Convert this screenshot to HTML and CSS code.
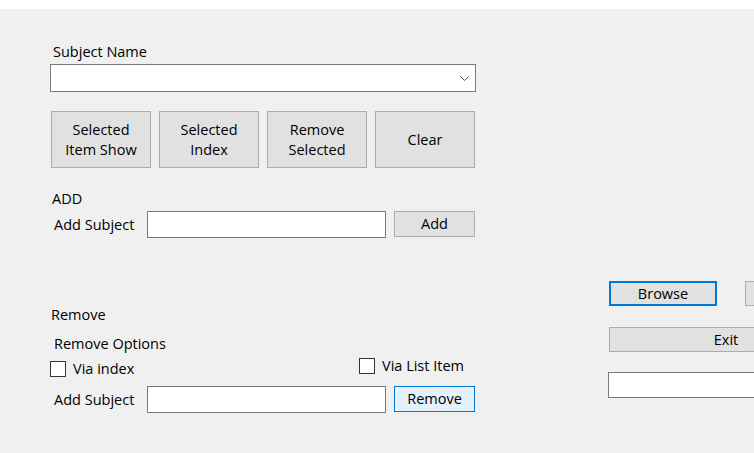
FILE: index.html
```html
<!DOCTYPE html>
<html lang="en">
<head>
<meta charset="utf-8">
<title>Subjects</title>
<link rel="stylesheet" href="styles.css">
</head>
<body>
<div class="topbar"></div>
<main class="form">
  <section class="left">
    <div class="lbl subj">Subject Name</div>
    <div class="combo">
      <svg class="chev" width="9" height="5" viewBox="0 0 9 5"><polyline points="0.5,0.5 4.5,4.5 8.5,0.5" fill="none" stroke="#555" stroke-width="1"/></svg>
    </div>
    <div class="btnrow">
      <button class="btn big">Selected<br>Item Show</button>
      <button class="btn big">Selected<br>Index</button>
      <button class="btn big">Remove<br>Selected</button>
      <button class="btn big">Clear</button>
    </div>
    <div class="lbl add-title">ADD</div>
    <div class="row row-add">
      <div class="lbl rowlbl">Add Subject</div>
      <div class="textbox"></div>
      <button class="btn small">Add</button>
    </div>
    <div class="lbl remove-title">Remove</div>
    <div class="lbl opts-title">Remove Options</div>
    <div class="checks">
      <label class="check c1"><span class="box"></span><span class="lbl">Via index</span></label>
      <label class="check c2"><span class="box"></span><span class="lbl">Via List Item</span></label>
    </div>
    <div class="row row-remove">
      <div class="lbl rowlbl">Add Subject</div>
      <div class="textbox"></div>
      <button class="btn small hover">Remove</button>
    </div>
  </section>
  <section class="right">
    <div class="rbtns">
      <button class="btn browse">Browse</button>
      <button class="btn other"></button>
    </div>
    <button class="btn exit">Exit</button>
    <div class="textbox rtext"></div>
  </section>
</main>
</body>
</html>
```
FILE: styles.css
```css
* { box-sizing: border-box; }
html, body {
  margin: 0;
  padding: 0;
  width: 754px;
  height: 453px;
  overflow: hidden;
  background: #f0f0f0;
  font-family: "Open Sans", "Noto Sans", sans-serif;
  font-size: 14.5px;
  color: #000;
}
.topbar {
  height: 9px;
  background: #ffffff;
}
.form {
  display: flex;
  align-items: flex-start;
  padding-top: 33px;
  width: 754px;
  overflow: hidden;
}
.left {
  width: 476px;
  padding-left: 50px;
  flex: none;
  display: flex;
  flex-direction: column;
}
.lbl {
  line-height: 20px;
  white-space: nowrap;
}
.subj { margin-left: 3px; }
.combo {
  margin-top: 2px;
  height: 28px;
  width: 426px;
  background: #fff;
  border: 1px solid #7a7a7a;
  display: flex;
  justify-content: flex-end;
  align-items: center;
  padding-right: 6px;
}
.chev { display: block; }
.btn {
  font-family: inherit;
  font-size: 14.5px;
  color: #000;
  background: #e1e1e1;
  border: 1px solid #adadad;
  padding: 0;
  margin: 0;
  line-height: 20px;
  text-align: center;
  flex: none;
}
.btnrow {
  margin-top: 19px;
  margin-left: 1px;
  display: flex;
  gap: 8px;
}
.btn.big {
  width: 100px;
  height: 57px;
}
.add-title { margin-top: 21px; margin-left: 2px; }
.row {
  display: flex;
  align-items: flex-start;
}
.row-add { margin-top: 2px; }
.rowlbl {
  width: 97px;
  padding-left: 4px;
  align-self: center;
}
.textbox {
  width: 239px;
  height: 27px;
  background: #fff;
  border: 1px solid #7a7a7a;
  flex: none;
}
.btn.small {
  margin-left: 8px;
  width: 81px;
  height: 26px;
}
.btn.hover {
  background: #e5f1fb;
  border-color: #0078d7;
}
.remove-title { margin-top: 67px; margin-left: 1px; }
.opts-title { margin-top: 9px; margin-left: 4px; }
.checks {
  display: grid;
  grid-template-columns: 309px auto;
  align-items: start;
  margin-top: 3px;
}
.check {
  display: flex;
  align-items: center;
  gap: 7px;
}
.c1 { margin-top: 2px; }
.c2 { margin-top: -1px; }
.box {
  width: 16px;
  height: 16px;
  background: #fff;
  border: 1px solid #333;
  flex: none;
}
.row-remove { margin-top: 7px; }
.right {
  margin-left: 132px;
  padding-top: 239px;
  flex: 1;
  min-width: 0;
  overflow: hidden;
  display: flex;
  flex-direction: column;
  align-items: flex-start;
}
.rbtns {
  display: flex;
  gap: 28px;
  margin-left: 1px;
}
.btn.browse {
  width: 108px;
  height: 25px;
  border: 2px solid #0078d7;
}
.btn.other {
  width: 108px;
  height: 25px;
}
.btn.exit {
  margin-top: 21px;
  margin-left: 1px;
  width: 234px;
  height: 25px;
}
.rtext {
  margin-top: 20px;
  width: 240px;
  height: 26px;
}
```
